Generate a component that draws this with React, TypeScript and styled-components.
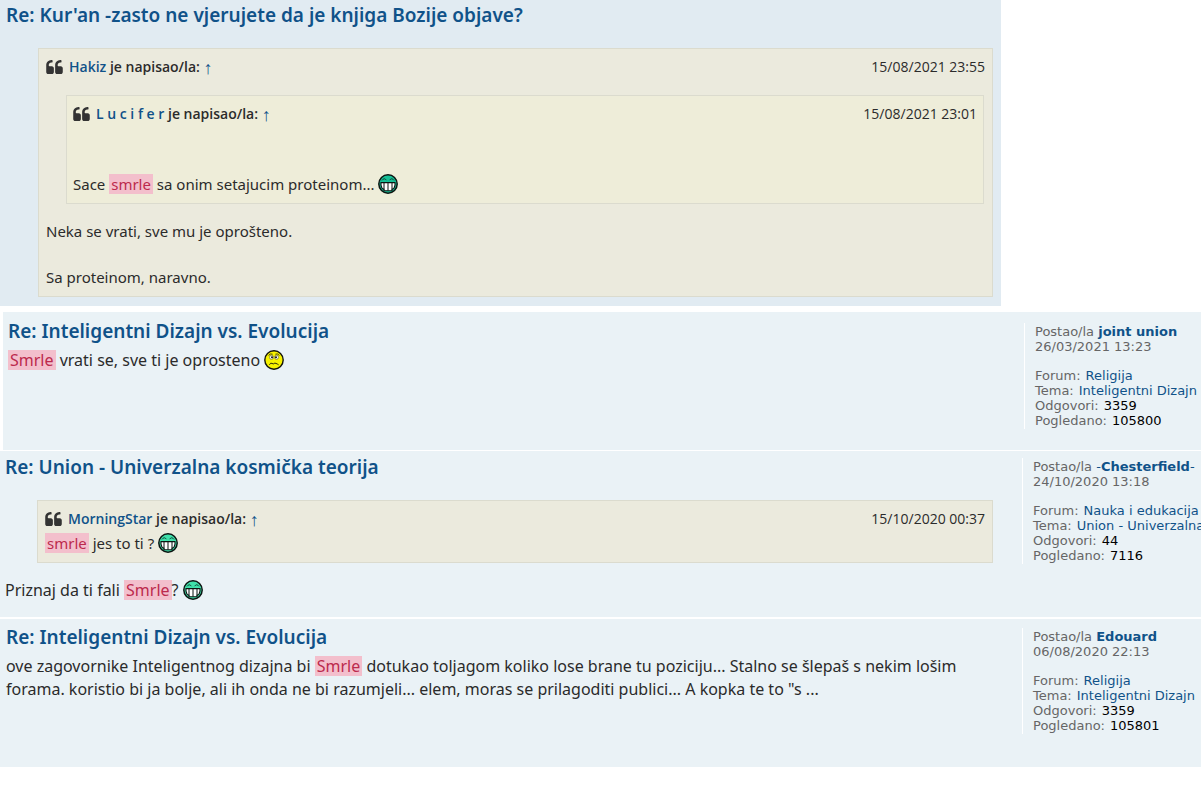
import React from "react";
import styled, { createGlobalStyle } from "styled-components";

const GlobalStyle = createGlobalStyle`
  *, *::before, *::after { box-sizing: border-box; }
  body {
    margin: 0;
    background: #ffffff;
    color: #2b2b2b;
    font-family: "Trebuchet MS", "Noto Sans", sans-serif;
    font-size: 16px;
    line-height: 23px;
    overflow-x: hidden;
  }
  a { color: #105289; text-decoration: none; }
  a:hover { text-decoration: underline; }
  p { margin: 0; }
`;

const Results = styled.main`
  display: flex;
  flex-direction: column;
`;

const Post = styled.article<{ $top: number; $bottom: number; $left?: number }>`
  display: flex;
  padding: ${(p) => p.$top}px 0 ${(p) => p.$bottom}px ${(p) => p.$left ?? 6}px;
  background: #eaf2f6;
`;

const LeadPost = styled(Post)`
  width: calc(100% - 200px);
  margin-bottom: 6px;
  padding-right: 8px;
  background: #e1ebf2;
`;

const InsetPost = styled(Post)`
  margin: 0 0 1px 3px;
`;

const RuledPost = styled(Post)`
  border-bottom: 2px solid #ffffff;
`;

const PostBody = styled.div<{ $wide?: boolean }>`
  flex: 1;
  min-width: 0;
  padding-right: ${(p) => (p.$wide ? 0 : 29)}px;
`;

const Title = styled.h3`
  margin: 0 0 4px;
  font-size: 19px;
  font-weight: 600;
  line-height: 28px;
`;

const Quote = styled.blockquote<{ $nested?: boolean }>`
  margin: ${(p) => (p.$nested ? "16px 1px 16px 20px" : "19px 0 16px 32px")};
  padding: ${(p) => (p.$nested ? "6px 6px 7px" : "6px 7px 7px")};
  border: 1px solid #dbdbce;
  background: ${(p) => (p.$nested ? "#eeedd9" : "#ebeadd")};
  font-size: 15px;

  &:last-child { margin-bottom: 0; }
`;

const QuoteHead = styled.header`
  display: flex;
  align-items: center;
  gap: 6px;
  margin-bottom: 1px;
  font-family: "Trebuchet MS", "Open Sans", sans-serif;
  font-size: 14px;
  line-height: 24px;
`;

const Cite = styled.cite`
  font-style: normal;
  font-weight: 600;
`;

const Arrow = styled.a`
  font-family: "Liberation Serif", serif;
  font-size: 18px;
  font-weight: 400;
  line-height: 16px;
  vertical-align: -2px;
`;

const QuoteTime = styled.time`
  margin-left: auto;
`;

const Gap = styled.br``;

const Hit = styled.mark`
  display: inline-block;
  padding: 0 2px;
  background: #f3bfcc;
  color: #bc2a4d;
  line-height: 20px;
`;

const Details = styled.aside<{ $top: number; $width: number }>`
  flex: 0 0 ${(p) => p.$width}px;
  align-self: flex-start;
  overflow: hidden;
  margin-top: ${(p) => p.$top}px;
  padding: 1px 0 1px 10px;
  border-left: 1px solid #ffffff;
  color: #666666;
  font-family: "DejaVu Sans", Verdana, sans-serif;
  font-size: 13px;
  line-height: 15px;
  white-space: nowrap;
`;

const Stats = styled.dl`
  margin: 14px 0 0;

  div { display: flex; gap: 5px; }
  dd { margin: 0; color: #000000; }
`;

const Face = styled.svg`
  display: inline-block;
  width: 20px;
  height: 20px;
  vertical-align: -4px;
`;

function QuoteIcon() {
  return (
    <svg width="17" height="14" viewBox="0 128 1664 1408" fill="#333333" aria-hidden="true">
      <path d="M768 960v384q0 80-56 136t-136 56h-384q-80 0-136-56t-56-136v-704q0-104 40.5-198.5t109.5-163.5 163.5-109.5 198.5-40.5h64q26 0 45 19t19 45v128q0 26-19 45t-45 19h-64q-106 0-181 75t-75 181v32q0 40 28 68t68 28h224q80 0 136 56t56 136zM1664 960v384q0 80-56 136t-136 56h-384q-80 0-136-56t-56-136v-704q0-104 40.5-198.5t109.5-163.5 163.5-109.5 198.5-40.5h64q26 0 45 19t19 45v128q0 26-19 45t-45 19h-64q-106 0-181 75t-75 181v32q0 40 28 68t68 28h224q80 0 136 56t56 136z" />
    </svg>
  );
}

function GreenFace({ fill = "#3fe0aa" }: { fill?: string }) {
  return (
    <Face viewBox="0 0 20 20" role="img" aria-label=":mrgreen:">
      <circle cx="10" cy="10" r="9.2" fill={fill} stroke="#0b1512" strokeWidth="1.5" />
      <path d="M4 6.4Q6.2 3.2 8.4 6.2M11.6 6.2Q13.8 3.2 16 6.4" fill="none" stroke="#0b3a2c" strokeWidth="0.9" />
      <path d="M3 8.6H17V11Q16.6 14.6 14 15.4V16.8H6V15.4Q3.4 14.6 3 11Z" fill="#ffffff" stroke="#0b1512" strokeWidth="1.1" />
      <path d="M6 9V15.6M10 9V16.6M14 9V15.6" stroke="#0b1512" strokeWidth="1" />
    </Face>
  );
}

function SadFace() {
  return (
    <Face viewBox="0 0 20 20" role="img" aria-label=":(">
      <circle cx="10" cy="10" r="9.2" fill="#f7f200" stroke="#14140a" strokeWidth="1.4" />
      <path d="M4.6 5.4Q6.4 3.2 8.6 4.2M11.4 4.2Q13.6 3.2 15.4 5.4" fill="none" stroke="#14140a" strokeWidth="0.8" />
      <circle cx="7.5" cy="7.3" r="2" fill="#ffffff" stroke="#55552a" strokeWidth="0.6" />
      <circle cx="12.5" cy="7.3" r="2" fill="#ffffff" stroke="#55552a" strokeWidth="0.6" />
      <circle cx="8" cy="7.3" r="1" fill="#14140a" />
      <circle cx="12" cy="7.3" r="1" fill="#14140a" />
      <path d="M5.4 14.8Q6.6 12.4 8 13.4T10 13.6T12 13.4T14.6 14.8" fill="none" stroke="#14140a" strokeWidth="0.9" />
    </Face>
  );
}

function QuoteHeader({ author, time }: { author: string; time: string }) {
  return (
    <QuoteHead>
      <QuoteIcon />
      <Cite>
        <a href="#author">{author}</a> je napisao/la: <Arrow href="#source">↑</Arrow>
      </Cite>
      <QuoteTime>{time}</QuoteTime>
    </QuoteHead>
  );
}

interface DetailsProps {
  top: number;
  width?: number;
  author: React.ReactNode;
  time: string;
  forum: string;
  topic: string;
  replies: string;
  views: string;
}

function PostDetails({ top, width = 179, author, time, forum, topic, replies, views }: DetailsProps) {
  return (
    <Details $top={top} $width={width}>
      <div>Postao/la {author}</div>
      <time>{time}</time>
      <Stats>
        <div><dt>Forum:</dt><dd><a href="#forum">{forum}</a></dd></div>
        <div><dt>Tema:</dt><dd><a href="#topic">{topic}</a></dd></div>
        <div><dt>Odgovori:</dt><dd>{replies}</dd></div>
        <div><dt>Pogledano:</dt><dd>{views}</dd></div>
      </Stats>
    </Details>
  );
}

export default function App() {
  return (
    <>
      <GlobalStyle />
      <Results>
        <LeadPost $top={1} $bottom={9}>
          <PostBody $wide>
            <Title><a href="#post-1">Re: Kur'an -zasto ne vjerujete da je knjiga Bozije objave?</a></Title>
            <Quote>
              <QuoteHeader author="Hakiz" time="15/08/2021 23:55" />
              <Quote $nested>
                <QuoteHeader author="L u c i f e r" time="15/08/2021 23:01" />
                <p>
                  <Gap />
                  <Gap />
                  Sace <Hit>smrle</Hit> sa onim setajucim proteinom... <GreenFace fill="#14bf95" />
                </p>
              </Quote>
              <p>
                Neka se vrati, sve mu je oprošteno.
                <Gap />
                <Gap />
                Sa proteinom, naravno.
              </p>
            </Quote>
          </PostBody>
        </LeadPost>

        <InsetPost $top={5} $bottom={21} $left={5}>
          <PostBody>
            <Title><a href="#post-2">Re: Inteligentni Dizajn vs. Evolucija</a></Title>
            <p><Hit>Smrle</Hit> vrati se, sve ti je oprosteno <SadFace /></p>
          </PostBody>
          <PostDetails top={6} width={177} author={<b><a href="#user">joint union</a></b>} time="26/03/2021 13:23"
            forum="Religija" topic="Inteligentni Dizajn" replies="3359" views="105800" />
        </InsetPost>

        <RuledPost $top={2} $bottom={15} $left={5}>
          <PostBody>
            <Title><a href="#post-3">Re: Union - Univerzalna kosmička teorija</a></Title>
            <Quote>
              <QuoteHeader author="MorningStar" time="15/10/2020 00:37" />
              <p><Hit>smrle</Hit> jes to ti ? <GreenFace /></p>
            </Quote>
            <p>Priznaj da ti fali <Hit>Smrle</Hit>? <GreenFace /></p>
          </PostBody>
          <PostDetails top={5} author={<a href="#user">-<b>Chesterfield</b>-</a>} time="24/10/2020 13:18"
            forum="Nauka i edukacija" topic="Union - Univerzalna kosmička teorija" replies="44" views="7116" />
        </RuledPost>

        <Post $top={4} $bottom={33}>
          <PostBody>
            <Title><a href="#post-4">Re: Inteligentni Dizajn vs. Evolucija</a></Title>
            <p>
              ove zagovornike Inteligentnog dizajna bi <Hit>Smrle</Hit> dotukao toljagom koliko lose brane tu poziciju... Stalno se šlepaš s nekim lošim
              <Gap />
              forama. koristio bi ja bolje, ali ih onda ne bi razumjeli... elem, moras se prilagoditi publici... A kopka te to "s ...
            </p>
          </PostBody>
          <PostDetails top={5} author={<b><a href="#user">Edouard</a></b>} time="06/08/2020 22:13"
            forum="Religija" topic="Inteligentni Dizajn" replies="3359" views="105801" />
        </Post>
      </Results>
    </>
  );
}
